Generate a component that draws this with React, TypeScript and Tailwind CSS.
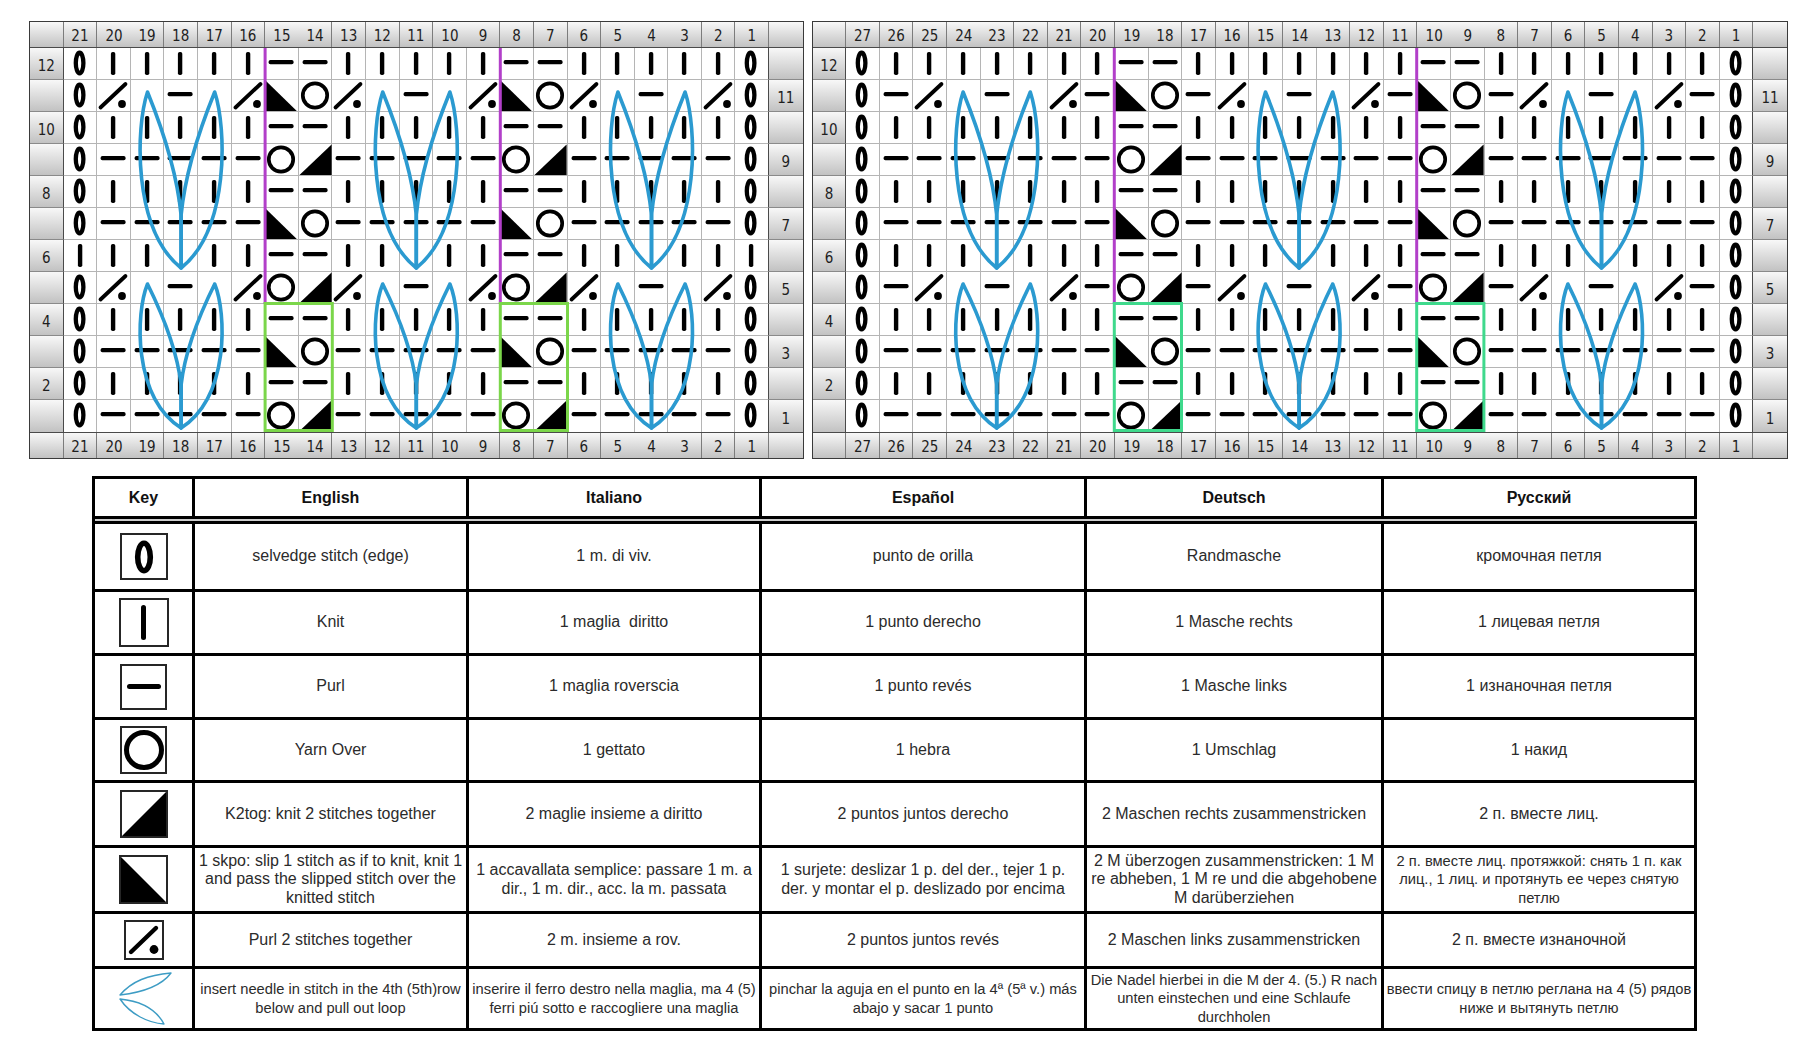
import React from 'react'

const W = 33.6
const H = 32

// rows are listed top (row 12) to bottom (row 1), stitches left to right
const L12 = 'SKKKKKPPKKKKKPPKKKKKS'
const L11 = 'ST.P.TLOT.P.TLOT.P.TS'
const L9 = 'SPPPPPORPPPPPORPPPPPS'
const L7 = 'SPPPPPLOPPPPPLOPPPPPS'
const L6 = 'KKK.KKPPKK.KKPPKK.KKK'
const L5 = 'ST.P.TORT.P.TORT.P.TS'
const LEFT_ROWS = [L12, L11, L12, L9, L12, L7, L6, L5, L12, L7, L12, L9]

const R12 = 'SKKKKKKKPPKKKKKKKPPKKKKKKKS'
const R11 = 'SPT.P.TPLOPT.P.TPLOPT.P.TPS'
const R9 = 'SPPPPPPPORPPPPPPPORPPPPPPPS'
const R7 = 'SPPPPPPPLOPPPPPPPLOPPPPPPPS'
const R6 = 'SKKK.KKKPPKKK.KKKPPKKK.KKKS'
const R5 = 'SPT.P.TPORPT.P.TPORPT.P.TPS'
const RIGHT_ROWS = [R12, R11, R12, R9, R12, R7, R6, R5, R12, R7, R12, R9]

function Stitch({ t }: { t: string }) {
  if (t === '.') return null
  return (
    <svg className="absolute left-0 top-0" width={W} height={H} viewBox={`0 0 ${W} ${H}`} overflow="visible">
      {t === 'S' && <ellipse cx={15.6} cy={15} rx={3.8} ry={10.3} fill="none" stroke="#000" strokeWidth={4.3} />}
      {t === 'K' && <rect x={13.9} y={4} width={4.4} height={23} rx={1.8} fill="#000" />}
      {t === 'P' && <rect x={3.6} y={12} width={25} height={4.2} rx={1.8} fill="#000" />}
      {t === 'O' && <circle cx={16} cy={15.5} r={12.2} fill="none" stroke="#000" strokeWidth={3.7} />}
      {t === 'R' && <polygon points="32.6,0.5 32.6,31 0.5,31" fill="#000" />}
      {t === 'L' && <polygon points="0,0 0,31 31.8,31" fill="#000" />}
      {t === 'T' && (
        <>
          <line x1={3.5} y1={27.5} x2={28.5} y2={4} stroke="#000" strokeWidth={3.8} strokeLinecap="round" />
          <circle cx={25} cy={24} r={3.9} fill="#000" />
        </>
      )}
    </svg>
  )
}

function leafPath(cx: number, yT: number, yB: number, s: number) {
  const h = yB - yT
  return `M ${cx} ${yB} C ${cx + s * 1.45 * W} ${yB - 0.22 * h} ${cx + s * 1.35 * W} ${yB - 0.8 * h} ${cx + s * W} ${yT} Q ${cx + s * 0.15 * W} ${yB - 0.6 * h} ${cx} ${yB - 0.3 * h} L ${cx} ${yB}`
}

type ChartProps = {
  n: number
  rows: string[]
  noDiv: number[]
  leaves: number[]
  purple: number[]
  greenColor: string
}

function Chart({ n, rows, noDiv, leaves, purple, greenColor }: ChartProps) {
  const cols = Array.from({ length: n }, (_, i) => n - i)

  const numbers = (top: boolean) => (
    <div
      className={`flex h-[26px] bg-linear-to-b from-[#f8f8f8] to-[#c2c2c2] ${
        top ? 'border-b border-[#4a4a4a]' : 'border-t border-[#4a4a4a]'
      }`}
    >
      <div className="w-[33.6px] shrink-0 border-r border-[#7c7c7c]" />
      {cols.map((c) => (
        <div
          key={c}
          className={`flex w-[33.6px] shrink-0 items-end justify-center pb-[3px] leading-none ${
            noDiv.includes(c) ? '' : 'border-r border-[#7c7c7c]'
          }`}
        >
          {c}
        </div>
      ))}
      <div className="w-[33.6px] shrink-0" />
    </div>
  )

  return (
    <div className="flex shrink-0 flex-col border border-[#3a3a3a] font-['DejaVu_Sans_Condensed','DejaVu_Sans',sans-serif] text-[15px] text-[#1e1e1e]">
      {numbers(true)}
      <div className="relative">
        {rows.map((row, r) => {
          const num = 12 - r
          const last = r === 11
          return (
            <div key={r} className="flex h-[32px]">
              <div
                className={`flex w-[33.6px] shrink-0 items-center justify-center border-r border-r-[#4a4a4a] bg-linear-to-b from-[#f8f8f8] to-[#c2c2c2] pt-[6px] ${
                  last ? '' : 'border-b border-b-[#8a8a8a]'
                }`}
              >
                {num % 2 === 0 ? num : ''}
              </div>
              {row.split('').map((t, i) => (
                <div
                  key={i}
                  className={`relative w-[33.6px] shrink-0 border-r ${
                    i === n - 1 ? 'border-r-[#4a4a4a]' : 'border-r-[#b5b5b5]'
                  } ${last ? '' : 'border-b border-b-[#b5b5b5]'}`}
                >
                  <Stitch t={t} />
                </div>
              ))}
              <div
                className={`flex w-[33.6px] shrink-0 items-center justify-center bg-linear-to-b from-[#f8f8f8] to-[#c2c2c2] pt-[6px] ${
                  last ? '' : 'border-b border-b-[#8a8a8a]'
                }`}
              >
                {num % 2 === 1 ? num : ''}
              </div>
            </div>
          )
        })}

        <svg
          className="pointer-events-none absolute left-[33.6px] top-0"
          width={n * W}
          height={12 * H}
          overflow="visible"
        >
          {purple.map((k) => (
            <line key={`p${k}`} x1={k * W - 0.5} y1={0} x2={k * W - 0.5} y2={8 * H} stroke="#b23fc9" strokeWidth={3} />
          ))}
          {purple.map((k) => (
            <rect
              key={`g${k}`}
              x={k * W - 0.5}
              y={8 * H - 0.5}
              width={2 * W}
              height={4 * H - 1}
              fill="none"
              stroke={greenColor}
              strokeWidth={3}
            />
          ))}
          {leaves.map((idx) => {
            const cx = (idx + 0.5) * W - 0.5
            return (
              <g key={idx} fill="none" stroke="#2b9ad0" strokeWidth={3.6} strokeLinejoin="round" strokeLinecap="round">
                <path d={leafPath(cx, H + 12, 7 * H - 4, -1)} />
                <path d={leafPath(cx, H + 12, 7 * H - 4, 1)} />
                <path d={leafPath(cx, 7 * H + 12, 12 * H - 4, -1)} />
                <path d={leafPath(cx, 7 * H + 12, 12 * H - 4, 1)} />
              </g>
            )
          })}
        </svg>
      </div>
      {numbers(false)}
    </div>
  )
}

const boxCls = 'flex items-center justify-center border-2 border-[#262626]'

const ICONS: React.ReactNode[] = [
  <div key="s" className={`${boxCls} h-[47px] w-[48px]`}>
    <svg width="20" height="36" viewBox="0 0 20 36">
      <ellipse cx="10" cy="18" rx="6.3" ry="13.7" fill="none" stroke="#000" strokeWidth="5.6" />
    </svg>
  </div>,
  <div key="k" className={`${boxCls} h-[49px] w-[50px]`}>
    <div className="h-[35px] w-[5px] rounded-full bg-black" />
  </div>,
  <div key="p" className={`${boxCls} h-[46px] w-[47px]`}>
    <div className="h-[5px] w-[34px] rounded-full bg-black" />
  </div>,
  <div key="o" className={`${boxCls} h-[48px] w-[47px]`}>
    <div className="h-[40px] w-[40px] rounded-full border-[5px] border-black" />
  </div>,
  <div key="r" className={`${boxCls} h-[48px] w-[48px]`}>
    <svg width="44" height="44" viewBox="0 0 44 44">
      <polygon points="44,0 44,44 0,44" fill="#000" />
    </svg>
  </div>,
  <div key="l" className={`${boxCls} h-[49px] w-[49px]`}>
    <svg width="45" height="45" viewBox="0 0 45 45">
      <polygon points="0,0 0,45 45,45" fill="#000" />
    </svg>
  </div>,
  <div key="t" className={`${boxCls} h-[40px] w-[40px]`}>
    <svg width="36" height="36" viewBox="0 0 36 36">
      <line x1="5" y1="30" x2="30" y2="6" stroke="#000" strokeWidth="4.4" strokeLinecap="round" />
      <circle cx="28" cy="27.5" r="4.4" fill="#000" />
    </svg>
  </div>,
  <svg key="leaf" width="56" height="56" viewBox="0 0 56 56" className="ml-[4px]">
    <g fill="none" stroke="#3d9cc4" strokeWidth="1.4" strokeLinejoin="round">
      <path d="M2 24 C 14 10, 30 4, 53 2 C 44 14, 28 21, 2 24 Z" />
      <path d="M2 28 C 22 30, 38 38, 46 53 C 30 52, 12 43, 2 28 Z" />
    </g>
  </svg>,
]

type KeyRow = { h: string; cells: string[][]; sizes?: string[] }

const S16 = 'text-[16px]'
const S15 = 'text-[14.7px]'

const KEY_ROWS: KeyRow[] = [
  {
    h: 'h-[68px]',
    cells: [['selvedge stitch (edge)'], ['1 m. di viv.'], ['punto de orilla'], ['Randmasche'], ['кромочная петля']],
  },
  {
    h: 'h-[64px]',
    cells: [['Knit'], ['1 maglia\u00a0 diritto'], ['1 punto derecho'], ['1 Masche rechts'], ['1 лицевая петля']],
  },
  {
    h: 'h-[64px]',
    cells: [['Purl'], ['1 maglia roverscia'], ['1 punto revés'], ['1 Masche links'], ['1 изнаночная петля']],
  },
  {
    h: 'h-[63px]',
    cells: [['Yarn Over'], ['1 gettato'], ['1 hebra'], ['1 Umschlag'], ['1 накид']],
  },
  {
    h: 'h-[65px]',
    cells: [
      ['K2tog: knit 2 stitches together'],
      ['2 maglie insieme a diritto'],
      ['2 puntos juntos derecho'],
      ['2 Maschen rechts zusammenstricken'],
      ['2 п. вместе лиц.'],
    ],
  },
  {
    h: 'h-[66px]',
    sizes: [S16, S16, S16, S16, S15],
    cells: [
      ['1 skpo: slip 1 stitch as if to knit, knit 1', 'and pass the slipped stitch over the', 'knitted stitch'],
      ['1 accavallata semplice: passare 1 m. a', 'dir., 1 m. dir., acc. la m. passata'],
      ['1 surjete: deslizar 1 p. del der., tejer 1 p.', 'der. y montar el p. deslizado por encima'],
      ['2 M überzogen zusammenstricken: 1 M', 're abheben, 1 M re und die abgehobene', 'M darüberziehen'],
      ['2 п. вместе лиц. протяжкой: снять 1 п. как', 'лиц., 1 лиц. и протянуть ее через снятую', 'петлю'],
    ],
  },
  {
    h: 'h-[55px]',
    cells: [
      ['Purl 2 stitches together'],
      ['2 m. insieme a rov.'],
      ['2 puntos juntos revés'],
      ['2 Maschen links zusammenstricken'],
      ['2 п. вместе изнаночной'],
    ],
  },
  {
    h: 'h-[62px]',
    sizes: [S15, S15, S15, S15, S15],
    cells: [
      ['insert needle in stitch in the 4th (5th)row', 'below and pull out loop'],
      ['inserire il ferro destro nella maglia, ma 4 (5)', 'ferri piú sotto e raccogliere una maglia'],
      ['pinchar la aguja en el punto en la 4ª (5ª v.) más', 'abajo y sacar 1 punto'],
      ['Die Nadel hierbei in die M der 4. (5.) R nach', 'unten einstechen und eine Schlaufe', 'durchholen'],
      ['ввести спицу в петлю реглана на 4 (5) рядов', 'ниже и вытянуть петлю'],
    ],
  },
]

const HEADERS = ['Key', 'English', 'Italiano', 'Español', 'Deutsch', 'Русский']
const gridCls = 'grid grid-cols-[100px_274px_293px_325px_297px_313px]'
const cellCls = 'flex items-center justify-center border-r-[3px] border-b-[3px] border-black px-[2px] text-center'

function KeyTable() {
  return (
    <div className="ml-[92px] mt-[17px] w-[1605px] border-l-[3px] border-t-[3px] border-black font-['Liberation_Sans',Arial,sans-serif] text-[#2b2b2b]">
      <div className={`${gridCls} h-[40px]`}>
        {HEADERS.map((h) => (
          <div key={h} className={`${cellCls} text-[16px] font-bold text-[#111]`}>
            {h}
          </div>
        ))}
      </div>
      <div className="h-[5px] border-b-[3px] border-black bg-[#cdcdcd]" />
      {KEY_ROWS.map((row, r) => (
        <div key={r} className={`${gridCls} ${row.h}`}>
          <div className={cellCls}>{ICONS[r]}</div>
          {row.cells.map((lines, c) => (
            <div
              key={c}
              className={`${cellCls} whitespace-nowrap leading-[18.5px] ${row.sizes ? row.sizes[c] : S16}`}
            >
              <div>
                {lines.map((line, i) => (
                  <div key={i}>{line}</div>
                ))}
              </div>
            </div>
          ))}
        </div>
      ))}
    </div>
  )
}

export default function App() {
  return (
    <div className="h-[1060px] w-[1800px] overflow-hidden bg-white">
      <div className="flex items-start gap-[8px] pl-[29px] pt-[21px]">
        <Chart
          n={21}
          rows={LEFT_ROWS}
          noDiv={[20, 15, 10, 5, 4]}
          leaves={[3, 10, 17]}
          purple={[6, 13]}
          greenColor="#7bd64a"
        />
        <Chart
          n={27}
          rows={RIGHT_ROWS}
          noDiv={[24, 19, 14, 10, 9]}
          leaves={[4, 13, 22]}
          purple={[8, 17]}
          greenColor="#3fd98c"
        />
      </div>
      <KeyTable />
    </div>
  )
}
